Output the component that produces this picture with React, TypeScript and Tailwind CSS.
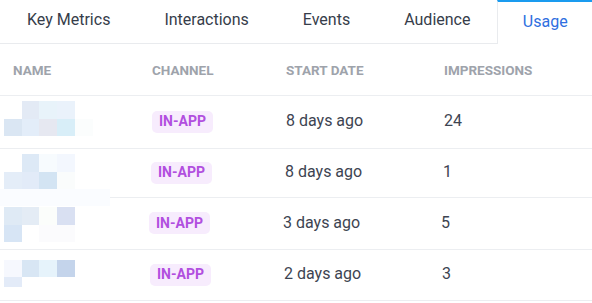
import React from "react";

const rows: {
  rowCls: string;
  shiftCls: string;
  date: string;
  imp: string;
  blocks: string[];
}[] = [
  {
    rowCls: "h-[53px]",
    shiftCls: "ml-0",
    date: "8 days ago",
    imp: "24",
    blocks: [
      "left-[22px] top-[5px] w-[17px] h-[18px] bg-[#e3eaf5]",
      "left-[39px] top-[5px] w-[18px] h-[18px] bg-[#e8f3fa]",
      "left-[57px] top-[5px] w-[18px] h-[18px] bg-[#eaf2fb]",
      "left-[4px] top-[23px] w-[18px] h-[17px] bg-[#dae6f3]",
      "left-[22px] top-[23px] w-[17px] h-[17px] bg-[#e3edf9]",
      "left-[39px] top-[23px] w-[18px] h-[17px] bg-[#e6e8f1]",
      "left-[57px] top-[23px] w-[18px] h-[17px] bg-[#d8eef8]",
      "left-[75px] top-[23px] w-[18px] h-[17px] bg-[#fbfdfd]",
    ],
  },
  {
    rowCls: "h-[49px]",
    shiftCls: "-ml-px",
    date: "8 days ago",
    imp: "1",
    blocks: [
      "left-[22px] top-[5px] w-[17px] h-[18px] bg-[#dde9f6]",
      "left-[39px] top-[5px] w-[18px] h-[18px] bg-[#f7fbfe]",
      "left-[57px] top-[5px] w-[18px] h-[18px] bg-[#f3f7fe]",
      "left-[4px] top-[23px] w-[18px] h-[17px] bg-[#e4edf8]",
      "left-[22px] top-[23px] w-[17px] h-[17px] bg-[#e2ebf8]",
      "left-[39px] top-[23px] w-[18px] h-[17px] bg-[#d3e4f3]",
      "left-[57px] top-[23px] w-[18px] h-[17px] bg-[#fafcfc]",
      "left-0 top-[40px] w-[110px] h-[17px] bg-[#fafcff]",
    ],
  },
  {
    rowCls: "h-[52px]",
    shiftCls: "-ml-[3px]",
    date: "3 days ago",
    imp: "5",
    blocks: [
      "left-[4px] top-[9px] w-[18px] h-[18px] bg-[#dfeaf5]",
      "left-[22px] top-[9px] w-[17px] h-[18px] bg-[#e4ecf5]",
      "left-[39px] top-[9px] w-[18px] h-[18px] bg-[#fbfdfb]",
      "left-[57px] top-[9px] w-[18px] h-[18px] bg-[#d9e0f2]",
      "left-[4px] top-[27px] w-[18px] h-[17px] bg-[#d7e5f5]",
      "left-[39px] top-[27px] w-[36px] h-[17px] bg-[#fbfbfd]",
    ],
  },
  {
    rowCls: "h-[51px]",
    shiftCls: "-ml-[2px]",
    date: "2 days ago",
    imp: "3",
    blocks: [
      "left-[4px] top-[10px] w-[18px] h-[17px] bg-[#f6f8fe]",
      "left-[22px] top-[10px] w-[17px] h-[17px] bg-[#d8e6f4]",
      "left-[39px] top-[10px] w-[18px] h-[17px] bg-[#e6f3fb]",
      "left-[57px] top-[10px] w-[18px] h-[17px] bg-[#c4d4eb]",
      "left-[4px] top-[27px] w-[18px] h-[10px] bg-[#e3ebf8]",
    ],
  },
];

const tabs = ["Key Metrics", "Interactions", "Events", "Audience"];

export default function App() {
  return (
    <div className="w-[592px] h-[303px] bg-white overflow-hidden font-[Roboto,'Noto_Sans',sans-serif]">
      <div className="flex h-[44px]">
        {tabs.map((t) => (
          <div
            key={t}
            className="px-[27px] flex items-center justify-center border-b border-[#e9ebee] text-[16px] text-[#363d4a] pb-[3px]"
          >
            {t}
          </div>
        ))}
        <div className="flex-1 flex items-center justify-center border-t-2 border-t-[#1a9bef] border-l border-l-[#e9ebee] text-[16px] text-[#2f6fe0] pb-[3px]">
          Usage
        </div>
      </div>
      <div className="grid grid-cols-[152px_134px_158px_1fr] h-[52px] items-center border-b border-[#eceef1] text-[13.5px] font-bold uppercase text-[#9ea3ab] pt-[2px]">
        <div className="pl-[13px]">Name</div>
        <div>Channel</div>
        <div>Start Date</div>
        <div>Impressions</div>
      </div>
      {rows.map((r, i) => (
        <div
          key={i}
          className={`grid grid-cols-[152px_134px_158px_1fr] items-center border-b border-[#eceef1] text-[16px] text-[#3d4451] ${r.rowCls}`}
        >
          <div className="relative h-full">
            {r.blocks.map((b, j) => (
              <div key={j} className={`absolute ${b}`} />
            ))}
          </div>
          <div className={`${r.shiftCls} pb-[2px]`}>
            <span className="inline-flex items-center h-[22px] px-[7px] rounded-[5px] bg-[#f7ecfd] text-[#b14fdf] text-[14px] font-bold">
              IN-APP
            </span>
          </div>
          <div className={`${r.shiftCls} pb-[2px]`}>{r.date}</div>
          <div className={`${r.shiftCls} pb-[2px]`}>{r.imp}</div>
        </div>
      ))}
    </div>
  );
}
